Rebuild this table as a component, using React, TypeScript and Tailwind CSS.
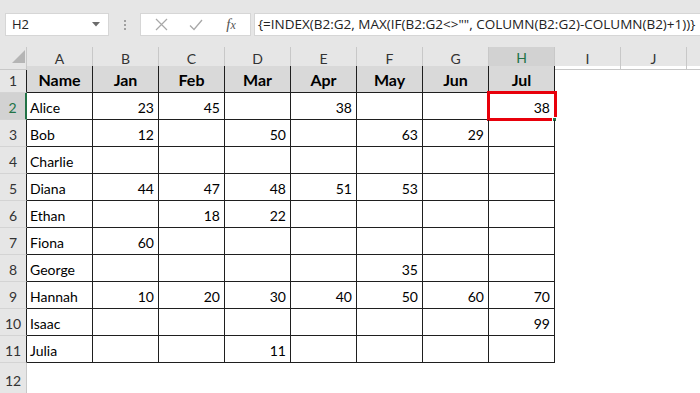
import React from "react";

const cols = ["A", "B", "C", "D", "E", "F", "G", "H", "I", "J"];
const data: (string | number | null)[][] = [
  ["Name", "Jan", "Feb", "Mar", "Apr", "May", "Jun", "Jul"],
  ["Alice", 23, 45, null, 38, null, null, 38],
  ["Bob", 12, null, 50, null, 63, 29, null],
  ["Charlie", null, null, null, null, null, null, null],
  ["Diana", 44, 47, 48, 51, 53, null, null],
  ["Ethan", null, 18, 22, null, null, null, null],
  ["Fiona", 60, null, null, null, null, null, null],
  ["George", null, null, null, null, 35, null, null],
  ["Hannah", 10, 20, 30, 40, 50, 60, 70],
  ["Isaac", null, null, null, null, null, null, 99],
  ["Julia", null, null, 11, null, null, null, null],
];

const gridCls = "grid grid-cols-[27px_repeat(10,66px)_1fr]";

export default function App() {
  return (
    <div className="w-[700px] h-[393px] overflow-hidden bg-white font-['Lato',sans-serif] text-[#000]">
      {/* Formula bar */}
      <div className="h-[47px] bg-[#e6e6e6] flex items-start pt-[13px] pl-[5px]">
        <div className="w-[104px] h-[23px] bg-white border border-[#d6d6d6] flex items-center justify-between pl-[6px] pr-[8px]">
          <span className="font-['Open_Sans',sans-serif] text-[13px] text-[#222]">H2</span>
          <svg width="8" height="5" viewBox="0 0 8 5"><path d="M0 0 L8 0 L4 4.5 Z" fill="#6b6b6b" /></svg>
        </div>
        <div className="w-[31px] h-[23px] flex flex-col items-center justify-center gap-[2px]">
          <span className="w-[2px] h-[2px] bg-[#a0a0a0]" />
          <span className="w-[2px] h-[2px] bg-[#a0a0a0]" />
          <span className="w-[2px] h-[2px] bg-[#a0a0a0]" />
        </div>
        <div className="w-[111px] h-[23px] bg-white border border-[#d6d6d6] flex items-center">
          <div className="w-[36px] flex justify-center pl-[4px]">
            <svg width="13" height="13" viewBox="0 0 13 13"><path d="M1 1 L12 12 M12 1 L1 12" stroke="#a8a8a8" strokeWidth="1.2" fill="none" /></svg>
          </div>
          <div className="w-[36px] flex justify-center pl-[2px]">
            <svg width="14" height="12" viewBox="0 0 14 12"><path d="M1 6.5 L5 10.5 L13 1" stroke="#a8a8a8" strokeWidth="1.3" fill="none" /></svg>
          </div>
          <div className="w-[36px] flex justify-center">
            <span className="font-['Liberation_Serif',serif] italic text-[15px] text-[#555] leading-none">f<span className="text-[12px]">x</span></span>
          </div>
        </div>
        <div className="ml-[3px] flex-1 h-[23px] bg-white border border-[#d6d6d6] border-r-0 flex items-center pl-[3px] overflow-hidden whitespace-nowrap">
          <span className="font-['Open_Sans',sans-serif] text-[13.5px] text-[#222]">
            {'{=INDEX(B2:G2, MAX(IF(B2:G2<>"", COLUMN(B2:G2)-COLUMN(B2)+1))}'}
          </span>
        </div>
      </div>

      {/* Column headers */}
      <div className={`${gridCls} h-[19px] bg-[#e6e6e6]`}>
        <div className="relative border-r border-[#c8c8c8] border-b border-b-[#c8c8c8]">
          <svg className="absolute left-[12px] top-[3px]" width="13" height="13" viewBox="0 0 13 13"><path d="M13 0 L13 13 L0 13 Z" fill="#b5b5b5" /></svg>
        </div>
        {cols.map((c, i) => {
          const sel = c === "H";
          const tableCol = i < 7;
          return (
            <div
              key={c}
              className={`flex items-center justify-center text-[14px] border-r ${
                sel
                  ? "bg-[#d2d2d2] text-[#217346] border-r-[#c8c8c8] border-b-2 border-b-[#217346]"
                  : tableCol
                  ? "text-[#333] border-r-[#c8c8c8] border-b border-b-[#1f1f1f]"
                  : "text-[#333] border-r-[#c8c8c8] border-b border-b-[#c8c8c8]"
              }`}
            >
              {c}
            </div>
          );
        })}
        <div className="border-b border-[#c8c8c8]" />
      </div>

      {/* Rows */}
      {data.map((row, r) => {
        const rowNum = r + 1;
        const selRow = rowNum === 2;
        return (
          <div key={r} className={`${gridCls} h-[27px]`}>
            <div
              className={`flex items-center justify-center text-[14px] pt-[3px] border-b border-b-[#d4d4d4] border-r ${
                selRow
                  ? "bg-[#d2d2d2] text-[#217346] border-r-2 border-r-[#217346]"
                  : "bg-[#e6e6e6] text-[#333] border-r-[#1f1f1f]"
              }`}
            >
              {rowNum}
            </div>
            {Array.from({ length: 8 }).map((_, c) => {
              const v = row[c];
              const header = r === 0;
              const isSel = rowNum === 2 && c === 7;
              return (
                <div
                  key={c}
                  className={`relative flex items-center border-r border-b border-[#1f1f1f] ${
                    header
                      ? "bg-[#d9d9d9] justify-center font-bold text-[16px] pt-[2px]"
                      : c === 0
                      ? "justify-start pl-[3px] text-[14px] pt-[2px]"
                      : "justify-end pr-[4px] text-[14px] pt-[2px]"
                  }`}
                >
                  {v !== null ? v : ""}
                  {isSel && (
                    <>
                      <div className="absolute left-[-2px] top-[-2px] right-[-3px] bottom-[-2px] border-[3px] border-[#e8000b]" />
                      <div className="absolute right-[-3px] bottom-[-3px] w-[5px] h-[5px] bg-[#217346] border border-white" />
                    </>
                  )}
                </div>
              );
            })}
            <div />
            <div />
            <div />
          </div>
        );
      })}

      {/* Row 12 */}
      <div className={`${gridCls} h-[30px]`}>
        <div className="flex items-start justify-center pt-[7px] text-[14px] text-[#333] bg-[#e6e6e6] border-r border-[#c8c8c8]">12</div>
      </div>
    </div>
  );
}
